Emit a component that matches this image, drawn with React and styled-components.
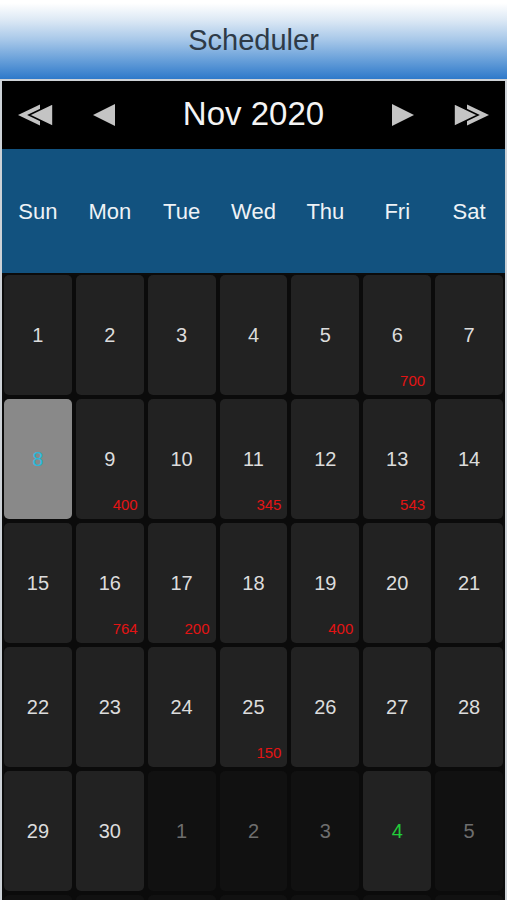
import React from "react";
import styled, { createGlobalStyle } from "styled-components";

const Global = createGlobalStyle`
  html, body { margin: 0; padding: 0; background: #ffffff; overflow: hidden; }
  body { font-family: "Liberation Sans", Arial, sans-serif; }
  * { box-sizing: border-box; }
`;

const Page = styled.div`
  width: 507px;
  height: 900px;
  overflow: hidden;
  display: flex;
  flex-direction: column;
`;

const TitleBar = styled.header`
  height: 79px;
  flex: none;
  display: flex;
  align-items: center;
  justify-content: center;
  background: linear-gradient(180deg, #ffffff 4%, #dde9f5 25%, #a8c8e9 50%, #6aa1da 75%, #2e79ca 100%);
  color: #2e3a47;
  font-size: 29px;
  padding-top: 2px;
`;

const Calendar = styled.section`
  flex: 1;
  border: 2px solid #cdd2d7;
  border-bottom: none;
  background: #0b0b0b;
  display: flex;
  flex-direction: column;
`;

const NavBar = styled.div`
  height: 68px;
  flex: none;
  background: #000;
  display: grid;
  grid-template-columns: 68px 68px 1fr 68px 68px;
  align-items: center;
  justify-items: center;
`;

const MonthTitle = styled.div`
  color: #f4f4f4;
  font-size: 33px;
  padding-bottom: 2px;
`;

const ArrowButton = styled.button`
  border: none;
  background: none;
  padding: 0;
  display: flex;
  align-items: center;
  justify-content: center;
  cursor: pointer;
`;

const DayNames = styled.div`
  height: 124px;
  flex: none;
  background: #12527f;
  display: grid;
  grid-template-columns: repeat(7, 1fr);
  gap: 4px;
  padding: 0 2px;
  align-items: center;
`;

const DayName = styled.div`
  color: #eef2f6;
  font-size: 22px;
  text-align: center;
  padding-top: 1px;
`;

const Grid = styled.div`
  display: grid;
  grid-template-columns: repeat(7, 1fr);
  grid-auto-rows: 120px;
  gap: 4px;
  padding: 2px;
`;

const variants = {
  normal: { bg: "#222222", fg: "#dcdcdc" },
  other: { bg: "#111111", fg: "#6e6e6e" },
  selected: { bg: "#898989", fg: "#2cb8d8" },
  today: { bg: "#222222", fg: "#22cc3a" },
};

const Cell = styled.div`
  position: relative;
  border-radius: 5px;
  background: ${(p) => variants[p.$kind].bg};
  color: ${(p) => variants[p.$kind].fg};
  display: flex;
  align-items: center;
  justify-content: center;
  font-size: 20px;
`;

const Amount = styled.span`
  position: absolute;
  right: 6px;
  bottom: 7px;
  color: #e31414;
  font-size: 15px;
  line-height: 15px;
`;

const Triangle = ({ dir }) => (
  <svg width="22" height="22" viewBox="0 0 22 22">
    {dir === "left" ? (
      <polygon points="0,11 22,0 22,22" fill="#c4c4c4" />
    ) : (
      <polygon points="22,11 0,0 0,22" fill="#c4c4c4" />
    )}
  </svg>
);

const DoubleTriangle = ({ dir }) => (
  <svg width="36" height="22" viewBox="0 0 36 22">
    {dir === "left" ? (
      <g>
        <polygon points="0,11 22,0.5 22,21.5" fill="#c4c4c4" />
        <polygon points="11,11 35,-0.5 35,22.5" fill="#c4c4c4" stroke="#000" strokeWidth="1.6" />
      </g>
    ) : (
      <g>
        <polygon points="36,11 14,0.5 14,21.5" fill="#c4c4c4" />
        <polygon points="25,11 1,-0.5 1,22.5" fill="#c4c4c4" stroke="#000" strokeWidth="1.6" />
      </g>
    )}
  </svg>
);

const dayNames = ["Sun", "Mon", "Tue", "Wed", "Thu", "Fri", "Sat"];

const amounts = { 6: "700", 9: "400", 11: "345", 13: "543", 16: "764", 17: "200", 19: "400", 25: "150" };

const cells = [];
for (let d = 1; d <= 30; d++) {
  cells.push({ key: `n${d}`, day: d, kind: d === 8 ? "selected" : "normal", amount: amounts[d] });
}
for (let d = 1; d <= 5; d++) {
  cells.push({ key: `d${d}`, day: d, kind: d === 4 ? "today" : "other" });
}
/* the sixth week only peeks in at the bottom edge */
for (let d = 6; d <= 12; d++) {
  cells.push({ key: `d${d}`, day: null, kind: "other" });
}

export default function App() {
  return (
    <>
      <Global />
      <Page>
        <TitleBar>Scheduler</TitleBar>
        <Calendar>
          <NavBar>
            <ArrowButton aria-label="Previous year"><DoubleTriangle dir="left" /></ArrowButton>
            <ArrowButton aria-label="Previous month"><Triangle dir="left" /></ArrowButton>
            <MonthTitle>Nov 2020</MonthTitle>
            <ArrowButton aria-label="Next month"><Triangle dir="right" /></ArrowButton>
            <ArrowButton aria-label="Next year"><DoubleTriangle dir="right" /></ArrowButton>
          </NavBar>
          <DayNames>
            {dayNames.map((n) => (
              <DayName key={n}>{n}</DayName>
            ))}
          </DayNames>
          <Grid>
            {cells.map((c) => (
              <Cell key={c.key} $kind={c.kind}>
                {c.day}
                {c.amount && <Amount>{c.amount}</Amount>}
              </Cell>
            ))}
          </Grid>
        </Calendar>
      </Page>
    </>
  );
}
